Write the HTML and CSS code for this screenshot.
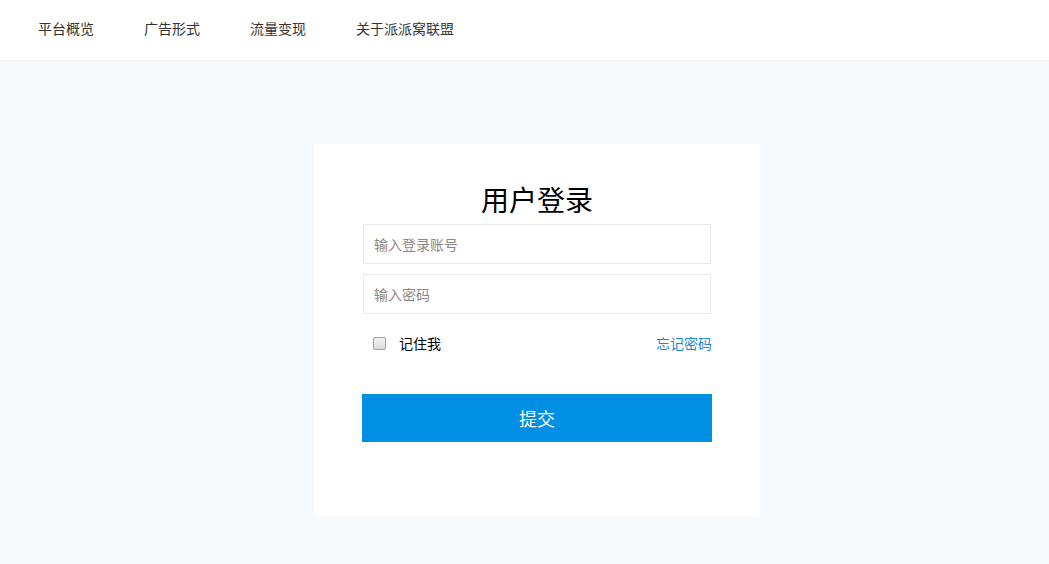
FILE: index.html
```html
<!DOCTYPE html>
<html lang="zh-CN">
<head>
<meta charset="utf-8">
<title>用户登录</title>
<link rel="stylesheet" href="styles.css">
</head>
<body>
<header class="header">
  <nav class="nav">
    <a class="nav-item" href="#">平台概览</a>
    <a class="nav-item" href="#">广告形式</a>
    <a class="nav-item" href="#">流量变现</a>
    <a class="nav-item" href="#">关于派派窝联盟</a>
  </nav>
</header>
<main class="main">
  <form class="card">
    <h1 class="title">用户登录</h1>
    <input class="field" type="text" placeholder="输入登录账号">
    <input class="field" type="password" placeholder="输入密码">
    <div class="row">
      <label class="remember"><input class="check" type="checkbox"><span>记住我</span></label>
      <a class="forgot" href="#">忘记密码</a>
    </div>
    <button class="submit" type="button">提交</button>
  </form>
</main>
</body>
</html>
```
FILE: styles.css
```css
* { box-sizing: border-box; }
html, body { margin: 0; padding: 0; }
body {
  font-family: "Microsoft YaHei", "Noto Sans CJK SC", sans-serif;
  background: #f5f9fc;
  color: #333;
  min-height: 564px;
}
.header {
  height: 61px;
  background: #fff;
  border-bottom: 1px solid #eef0f2;
}
.nav {
  display: flex;
  gap: 50px;
  padding-left: 38px;
  height: 60px;
  align-items: center;
  padding-bottom: 5px;
}
.nav-item {
  font-size: 14px;
  color: #333;
  text-decoration: none;
  line-height: 20px;
}
.main {
  display: flex;
  justify-content: center;
  padding: 83px 0 0 25px;
}
.card {
  width: 446px;
  background: #fff;
  padding: 37px 48px 74px;
  display: flex;
  flex-direction: column;
  margin: 0;
}
.title {
  margin: 0 0 7px;
  text-align: center;
  font-size: 28px;
  line-height: 36px;
  font-weight: normal;
  color: #000;
}
.field {
  width: 348px;
  height: 40px;
  margin: 0 0 10px 1px;
  border: 1px solid #eaeaea;
  padding: 0 10px;
  font-size: 14px;
  font-family: inherit;
  color: #333;
  outline: none;
}
.field::placeholder { color: #888; }
.row {
  display: flex;
  justify-content: space-between;
  align-items: center;
  height: 28px;
  margin-top: 5px;
}
.remember {
  display: flex;
  align-items: center;
  font-size: 14px;
  color: #000;
}
.check {
  appearance: none;
  -webkit-appearance: none;
  width: 13px;
  height: 13px;
  margin: 0 13px 0 11px;
  border: 1px solid #a0a0a0;
  border-radius: 2px;
  background: linear-gradient(#f4f4f4, #dcdcdc);
}
.forgot {
  font-size: 14px;
  color: #1a8ad8;
  text-decoration: none;
}
.submit {
  margin-top: 37px;
  width: 350px;
  height: 48px;
  border: 0;
  background: #008fe3;
  color: #fff;
  font-size: 18px;
  font-family: inherit;
  cursor: pointer;
}
```
